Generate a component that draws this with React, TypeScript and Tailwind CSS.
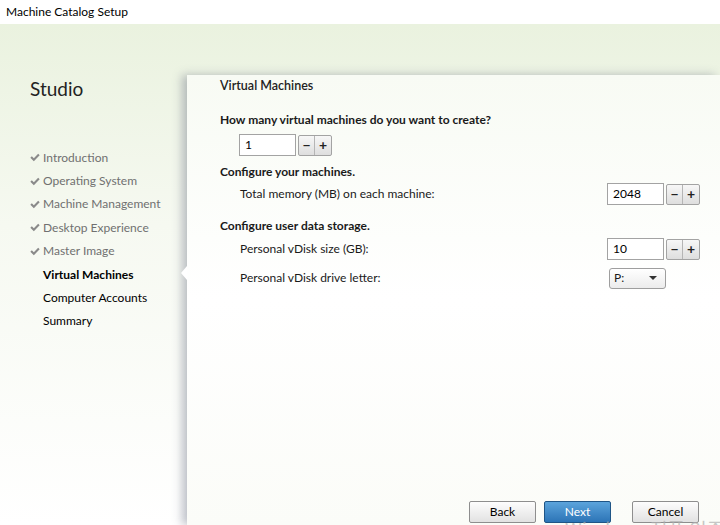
const steps = [
  { label: 'Introduction', done: true },
  { label: 'Operating System', done: true },
  { label: 'Machine Management', done: true },
  { label: 'Desktop Experience', done: true },
  { label: 'Master Image', done: true },
  { label: 'Virtual Machines', current: true },
  { label: 'Computer Accounts' },
  { label: 'Summary' },
];

function Check() {
  return (
    <svg viewBox="0 0 12 12" className="w-[11px] h-[11px]" fill="#8a8a8a">
      <path d="M0.4 6.3 L2.2 4.5 L4.6 6.9 L9.8 1.5 L11.6 3.3 L4.6 10.4 Z" />
    </svg>
  );
}

function Spinner({ value }: { value: string }) {
  return (
    <div className="flex items-center gap-[2px]">
      <div className="w-[57px] h-[22px] border border-[#a3a3a3] bg-white px-[5px] flex items-center text-[12px] text-black">
        {value}
      </div>
      <div className="flex h-[21px] border border-[#a3a3a3] rounded-[2px] bg-gradient-to-b from-[#f7f7f7] to-[#dedede]">
        <span className="w-[16px] flex items-center justify-center border-r border-[#b5b5b5] font-bold text-[14px] leading-none text-[#222]">−</span>
        <span className="w-[16px] flex items-center justify-center font-bold text-[14px] leading-none text-[#222]">+</span>
      </div>
    </div>
  );
}

function Button({ label, primary }: { label: string; primary?: boolean }) {
  return (
    <button
      type="button"
      className={
        primary
          ? 'w-[67px] h-[22px] rounded-[2px] border border-[#1f5586] bg-gradient-to-b from-[#5ba4dc] to-[#2c74b6] text-white text-[12px]'
          : 'w-[67px] h-[22px] rounded-[2px] border border-[#8e8e8e] bg-gradient-to-b from-[#fdfdfd] to-[#e2e2e2] text-black text-[12px]'
      }
    >
      {label}
    </button>
  );
}

export default function App() {
  return (
    <div className="relative w-[720px] h-[525px] overflow-hidden flex flex-col bg-white text-[#1a1a1a] font-['Lato','Noto_Sans',sans-serif]">
      {/* window title */}
      <div className="h-[24px] flex items-center px-[6px] text-[12px] text-black bg-white">
        Machine Catalog Setup
      </div>

      <div className="flex-1 flex bg-gradient-to-b from-[#eaf2df] via-[#f6f9f1] via-40% to-white">
        {/* sidebar */}
        <div className="w-[187px] flex flex-col pl-[30px] pt-[52px]">
          <div className="text-[19px] text-[#222] leading-[26px]">Studio</div>
          <div className="mt-[44px] flex flex-col">
            {steps.map((s) => (
              <div key={s.label} className="h-[23.4px] flex items-center gap-[3px]">
                <span className="w-[10px] flex justify-center">{s.done && <Check />}</span>
                <span
                  className={
                    s.done
                      ? 'text-[12px] text-[#707070]'
                      : s.current
                        ? 'text-[12px] font-bold text-black'
                        : 'text-[12px] text-black'
                  }
                >
                  {s.label}
                </span>
              </div>
            ))}
          </div>
        </div>

        {/* content panel */}
        <div className="flex-1 flex flex-col pt-[51px]">
          <div className="relative flex-1 flex flex-col bg-gradient-to-b from-[#f8fbf4] via-white to-[#fbfcf8] shadow-[-5px_0_9px_rgba(110,118,135,0.45)] pl-[33px] pr-[20px]">
            {/* current step notch */}
            <div className="absolute left-[-6px] top-[191px] w-0 h-0 border-y-[7px] border-y-transparent border-r-[6px] border-r-white" />

            <div className="pt-[2px] text-[12.5px] leading-[18px] font-semibold text-[#222]">Virtual Machines</div>

            <div className="mt-[16px] text-[12px] font-bold leading-[18px]">
              How many virtual machines do you want to create?
            </div>
            <div className="mt-[5px] pl-[19px]">
              <Spinner value="1" />
            </div>

            <div className="mt-[7px] text-[12px] font-bold leading-[18px]">Configure your machines.</div>
            <div className="flex items-center justify-between h-[22px] mt-[2px]">
              <span className="pl-[20px] text-[12px]">Total memory (MB) on each machine:</span>
              <Spinner value="2048" />
            </div>

            <div className="mt-[12px] text-[12px] font-bold leading-[18px]">Configure user data storage.</div>
            <div className="flex items-center justify-between h-[22px] mt-[3px]">
              <span className="pl-[20px] text-[12px]">Personal vDisk size (GB):</span>
              <Spinner value="10" />
            </div>
            <div className="flex items-center justify-between h-[22px] mt-[7px]">
              <span className="pl-[20px] text-[12px]">Personal vDisk drive letter:</span>
              <div className="w-[91px]">
                <div className="w-[57px] h-[21px] border border-[#9e9e9e] rounded-[3px] bg-gradient-to-b from-white to-[#ececec] flex items-center justify-between px-[4px] text-[12px]">
                  <span>P:</span>
                  <svg viewBox="0 0 8 4" className="w-[8px] h-[4px] mr-[4px]" fill="#333">
                    <path d="M0 0 H8 L4 4 Z" />
                  </svg>
                </div>
              </div>
            </div>

            <div className="flex-1" />
            <div className="flex items-center justify-end gap-[8px] pb-[2px] pr-[1px]">
              <Button label="Back" />
              <Button label="Next" primary />
              <div className="w-[5px]" />
              <Button label="Cancel" />
            </div>
          </div>
        </div>
      </div>

      {/* OS activation watermark */}
      <div className="absolute left-[565px] top-[517px] text-[19px] leading-[24px] text-[#b0b0b0]/70 whitespace-nowrap font-['Noto_Sans_CJK_KR',sans-serif]">
        Windows 정품 인증
      </div>
    </div>
  );
}
